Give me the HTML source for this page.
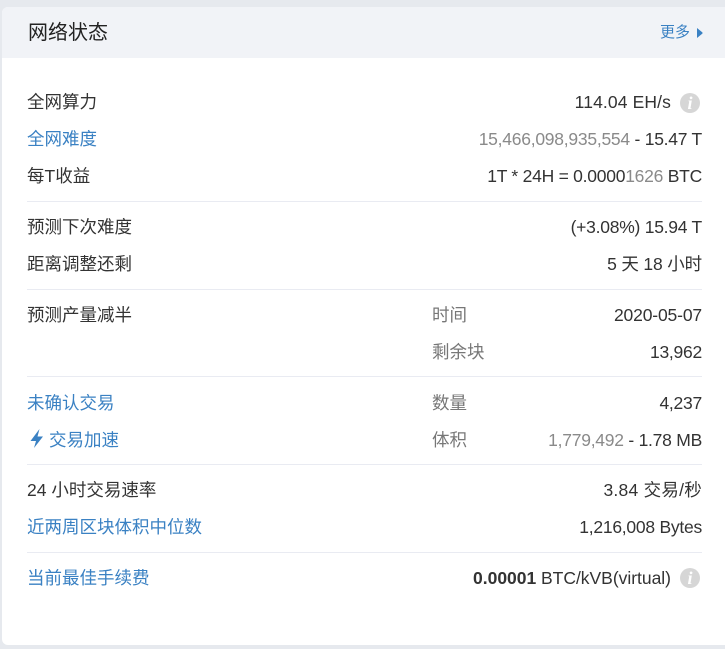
<!DOCTYPE html>
<html><head><meta charset="utf-8">
<style>
html,body{margin:0;padding:0;width:725px;height:649px;overflow:hidden;background:#e6e9ee}
body{position:relative;font-family:"Liberation Sans","Noto Sans CJK SC",sans-serif;font-size:17.5px;color:#333}
#card{position:absolute;left:2px;top:7px;width:740px;height:638px;background:#fff;border-radius:6px 0 0 6px}
#head{position:absolute;left:2px;top:7px;width:740px;height:51px;background:#f1f3f7;border-radius:6px 0 0 0}
.t{position:absolute;white-space:nowrap;line-height:24px;height:24px}
.l{left:27px}
.r{right:23px;text-align:right;letter-spacing:-.25px}
.m{left:432px;color:#777}
.b{color:#3a81c3}
.g{color:#8a8a8a}
.hr{position:absolute;left:27px;width:675px;height:1px;background:#e9ebf2}
.i{position:absolute;width:20px;height:20px;border-radius:50%;background:#d6d6d6;color:#fff;font:italic bold 18px/20px "Liberation Serif",serif;text-align:center}
</style></head><body>
<div id="card"></div><div id="head"></div>
<div class="t" style="left:28px;top:21px;font-size:20px;color:#222">网络状态</div>
<div class="t b" style="left:660px;top:21px;font-size:15px">更多</div>
<svg style="position:absolute;left:697px;top:28px" width="6" height="10"><path d="M0 0L5.5 4.5V5.5L0 10Z" fill="#3a81c3"/></svg>

<div class="t l" style="top:90px">全网算力</div>
<div class="t r" style="top:90px;right:54px;letter-spacing:.12px">114.04 EH/s</div>
<div class="i" style="left:680px;top:93px">i</div>
<div class="t l b" style="top:127px">全网难度</div>
<div class="t r" style="top:127px"><span class="g">15,466,098,935,554</span> - 15.47 T</div>
<div class="t l" style="top:164px">每T收益</div>
<div class="t r" style="top:164px">1T * 24H = 0.0000<span class="g">1626</span> BTC</div>
<div class="hr" style="top:201px"></div>

<div class="t l" style="top:215px">预测下次难度</div>
<div class="t r" style="top:215px">(+3.08%) 15.94 T</div>
<div class="t l" style="top:252px">距离调整还剩</div>
<div class="t r" style="top:252px;letter-spacing:-.15px">5 天 18 小时</div>
<div class="hr" style="top:289px"></div>

<div class="t l" style="top:303px">预测产量减半</div>
<div class="t m" style="top:303px">时间</div>
<div class="t r" style="top:303px;letter-spacing:-.15px">2020-05-07</div>
<div class="t m" style="top:340px">剩余块</div>
<div class="t r" style="top:340px">13,962</div>
<div class="hr" style="top:376px"></div>

<div class="t l b" style="top:391px">未确认交易</div>
<div class="t m" style="top:391px">数量</div>
<div class="t r" style="top:391px">4,237</div>
<svg style="position:absolute;left:30px;top:429px" width="13" height="19" viewBox="0 0 13 19"><path d="M9.5 0L.5 12H6L4 19L13 7.5H7.5Z" fill="#3a81c3"/></svg>
<div class="t b" style="left:49px;top:428px">交易加速</div>
<div class="t m" style="top:428px">体积</div>
<div class="t r" style="top:428px"><span class="g">1,779,492</span> - 1.78 MB</div>
<div class="hr" style="top:464px"></div>

<div class="t l" style="top:478px">24 小时交易速率</div>
<div class="t r" style="top:478px;letter-spacing:.25px">3.84 交易/秒</div>
<div class="t l b" style="top:515px">近两周区块体积中位数</div>
<div class="t r" style="top:515px">1,216,008 Bytes</div>
<div class="hr" style="top:552px"></div>

<div class="t l b" style="top:566px">当前最佳手续费</div>
<div class="t r" style="top:566px;right:54px;letter-spacing:-.02px"><b>0.00001</b> BTC/kVB(virtual)</div>
<div class="i" style="left:680px;top:568px">i</div>
</body></html>
